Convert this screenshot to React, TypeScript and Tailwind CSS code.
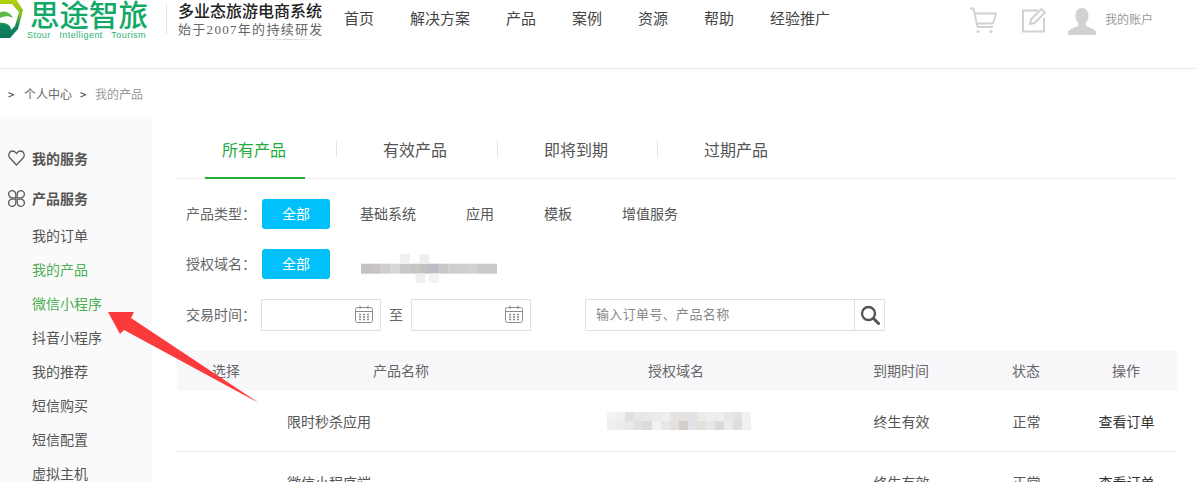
import React from "react";

function Mosaic({ w, h, cell, cells }: { w: number; h: number; cell: number; cells: [number, number, string][] }) {
  return (
    <svg width={w} height={h} viewBox={`0 0 ${w} ${h}`} className="shrink-0 blur-[0.5px]">
      {cells.map(([x, y, c], i) => (
        <rect key={i} x={x * cell} y={y * cell} width={cell + 0.3} height={cell + 0.3} fill={c} />
      ))}
    </svg>
  );
}

const domainCells: [number, number, string][] = [
  ...["#c4c2c1", "#c6c4c3", "#cfcdcd", "#d8d8d8", "#c9c8c8", "#c8c6c5", "#c2c0bf", "#bdbcc4", "#c9c8ca", "#cfcdcc", "#cfcecd", "#d3d1d1", "#cac9c9", "#cac9cb"].map(
    (c, i) => [i, 1, c] as [number, number, string],
  ),
  [4, 0, "#f1f1f1"],
  [6, 0, "#efefef"],
  [5.6, 2, "#f0f0f0"],
  [7, 2, "#f3f3f3"],
];

const rowCells: [number, number, string][] = [
  ...["#f3f3f3", "#f0f0f0", "#dfe0e2", "#e8e7e5", "#e9e8e6", "#ecebe9", "#eeeeee", "#e6e4e2", "#e4e1de", "#e0e3e6", "#ebebe9", "#eeeeec", "#eeeeee", "#e8e6e5", "#e4e2e1", "#f1f2f4"].map(
    (c, i) => [i, 0, c] as [number, number, string],
  ),
  ...["#eeeeee", "#ecebeb", "#e8e8e8", "#dde1e4", "#dbdad9", "#f2f2f2", "#e6e7e8", "#e6e0dc", "#d2d0ce", "#e1e3e6", "#e3dfdd", "#e7e7e9", "#dcd9d8", "#e9ebed", "#e0dedd", "#f1f1f3"].map(
    (c, i) => [i, 1, c] as [number, number, string],
  ),
];

function Logo() {
  return (
    <svg width="27" height="42" viewBox="0 0 27 42" className="shrink-0">
      <defs>
        <linearGradient id="hex" x1="0" y1="0" x2="0" y2="1">
          <stop offset="0" stopColor="#c8d600" />
          <stop offset="0.45" stopColor="#7fbf2a" />
          <stop offset="0.7" stopColor="#0f8a5f" />
          <stop offset="1" stopColor="#0c7258" />
        </linearGradient>
      </defs>
      <path d="M-2 -4H14L23 10L18 29L10 38H-2Z" fill="url(#hex)" />
      <path d="M-2 4H12L19 12L15 26L11 30C11 25 6 22 -2 23Z" fill="#fff" />
      <path d="M-2 13C4 10 10 12 13 18C8 15 3 16 -2 19Z" fill="#5ab947" />
    </svg>
  );
}

const nav = ["首页", "解决方案", "产品", "案例", "资源", "帮助", "经验推广"];
const side = ["我的订单", "我的产品", "微信小程序", "抖音小程序", "我的推荐", "短信购买", "短信配置", "虚拟主机"];
const types = ["基础系统", "应用", "模板", "增值服务"];

function Calendar() {
  return (
    <svg width="18" height="18" viewBox="0 0 18 18" fill="none" stroke="#8d8d8d" strokeWidth="1">
      <rect x="0.5" y="2.5" width="17" height="15" rx="2" />
      <path d="M0.5 6.500H17.500M5 0.500V4M13 0.500V4" />
      <path d="M4 9.500h2M8 9.500h2M12 9.500h2M4 12h2M8 12h2M12 12h2M4 14.500h2M8 14.500h2M12 14.500h2" strokeWidth="1.400" />
    </svg>
  );
}

function Pill() {
  return <span className="flex h-[30px] w-[68px] shrink-0 items-center justify-center rounded-[3px] bg-[#00c1f9] pb-[2px] text-[14px] text-white">全部</span>;
}

function DateBox() {
  return (
    <div className="flex h-8 w-[120px] items-center justify-end border border-[#e0e0e0] pr-[7px] pb-[2px]">
      <Calendar />
    </div>
  );
}

function Row({ name, domain, last }: { name: string; domain?: boolean; last?: boolean }) {
  return (
    <div className={`flex h-[61px] items-center text-[14px] text-[#555] ${last ? "" : "border-b border-[#ebebeb]"}`}>
      <span className="w-[98px]" />
      <span className="w-[252px] pl-[12px]">{name}</span>
      <span className="flex w-[298px] justify-center pl-[6px]">
        {domain && <Mosaic w={144} h={18} cell={9} cells={rowCells} />}
      </span>
      <span className="w-[152px] pl-px text-center">终生有效</span>
      <span className="w-[98px] pl-px text-center">正常</span>
      <span className="w-[102px] pl-px text-center text-[#333]">查看订单</span>
    </div>
  );
}

export default function App() {
  return (
    <div className="relative h-[482px] w-[1195px] overflow-hidden bg-white font-['Noto_Sans_CJK_SC','Noto_Sans',sans-serif] text-[#555]">
      <header className="flex h-[69px] items-start border-b border-[#e5e5e5]">
        <Logo />
        <div className="flex w-[139px] shrink-0 flex-col items-start">
          <span className="-mt-[2px] ml-[3px] text-[29.5px] leading-[30px] font-medium whitespace-nowrap text-[#12a866]">思途智旅</span>
          <span className="mt-px flex w-[119px] justify-between font-['Liberation_Sans',sans-serif] text-[9px] leading-[12px] tracking-[0.45px] text-[#2bb371]">
            <span>Stour</span>
            <span>Intelligent</span>
            <span>Tourism</span>
          </span>
        </div>
        <div className="mt-[4px] h-[30px] w-px bg-[#e3e3e3]" />
        <div className="ml-[11px] w-[166px] shrink-0">
          <div className="text-[16px] leading-[20px] font-medium whitespace-nowrap text-[#222]">多业态旅游电商系统</div>
          <div className="mt-px font-['Liberation_Serif','Noto_Sans_CJK_SC',serif] text-[13px] leading-[18px] tracking-[1.3px] whitespace-nowrap text-[#666]">始于2007年的持续研发</div>
          <div className="ml-[78px] h-px w-[68px] bg-gradient-to-r from-white via-[#d5d5d5] to-white" />
        </div>
        <nav className="flex gap-[36px] pt-[7px] text-[15px] leading-[22px] text-[#444]">
          {nav.map((n) => (
            <span key={n} className="whitespace-nowrap">{n}</span>
          ))}
        </nav>
        <div className="ml-auto flex items-start pt-[7px] pr-[42px]">
          <svg width="28" height="27" viewBox="0 0 28 27" fill="none" stroke="#d0d1d3" strokeWidth="1.800">
            <path d="M1 1.500h3.500L8.500 20H24" />
            <path d="M5.500 6.500H27L24 16.500H7.500" />
            <circle cx="9" cy="24.500" r="1.600" fill="#d0d1d3" stroke="none" />
            <circle cx="22" cy="24.500" r="1.600" fill="#d0d1d3" stroke="none" />
          </svg>
          <svg className="ml-[24px]" width="26" height="26" viewBox="0 0 26 26" fill="none" stroke="#d0d1d3" strokeWidth="2">
            <path d="M17 3.500H2v21h21V11" />
            <path d="M9 17l1-4.500L20.500 2l3.500 3.500L13.500 16Z" />
          </svg>
          <svg className="ml-[20px]" width="30" height="28" viewBox="0 0 30 28" fill="#d0d1d3">
            <path d="M15 1c4 0 6.500 3 6.500 7.500 0 3-1 5.500-2.800 7.500v2.500c2 1.500 8 3 10.300 6V28H1v-3.500c2.300-3 8.300-4.500 10.300-6V16C9.500 14 8.500 11.500 8.500 8.500 8.500 4 11 1 15 1Z" />
          </svg>
          <span className="ml-[8px] pt-[3px] text-[12px] leading-[18px] whitespace-nowrap text-[#999]">我的账户</span>
        </div>
      </header>

      <div className="flex h-[50px] items-center pl-[8px] text-[12px] text-[#666]">
        <span className="w-[16px] text-[11px] font-bold">&gt;</span>
        <span>个人中心</span>
        <span className="ml-[8px] w-[15px] text-[11px] font-bold">&gt;</span>
        <span className="text-[#999]">我的产品</span>
      </div>

      <div className="flex items-start">
        <aside className="h-[400px] w-[152px] shrink-0 bg-[#fafafa] pt-[28px] text-[14px]">
          <div className="flex h-[22px] items-center pl-[8px] font-bold text-[#555]">
            <svg width="17" height="16" viewBox="0 0 17 16" fill="none" stroke="#5a5a62" strokeWidth="1.300" className="mr-[7px]">
              <path d="M8.500 15L1.500 7.500C0 5.500 1 1 4.500 1c2 0 3 1 4 2.500 1-1.500 2-2.500 4-2.500 3.500 0 4.500 4.500 3 6.500Z" />
            </svg>
            我的服务
          </div>
          <div className="mt-[18px] flex h-[22px] items-center pl-[8px] font-bold text-[#555]">
            <svg width="17" height="17" viewBox="0 0 17 17" fill="none" stroke="#5a5a62" strokeWidth="1.300" className="mr-[7px]">
              <path d="M7.800 7.800H4.300A3.600 3.600 0 1 1 7.800 4.300Z" />
              <path d="M9.200 7.800V4.300A3.600 3.600 0 1 1 12.700 7.800Z" />
              <path d="M7.800 9.200V12.700A3.600 3.600 0 1 1 4.300 9.200Z" />
              <path d="M9.200 9.200H12.700A3.600 3.600 0 1 1 9.200 12.700Z" />
            </svg>
            产品服务
          </div>
          <ul className="mt-[9px] pl-[32px]">
            {side.map((s, i) => (
              <li key={s} className={`h-[34px] leading-[34px] ${i === 1 || i === 2 ? "text-[#4cae55]" : "text-[#555]"}`}>{s}</li>
            ))}
          </ul>
        </aside>

        <main className="ml-[25px] w-[1000px] shrink-0">
          <div className="flex h-[60px] items-center border-b border-[#ebebeb] text-[16px] text-[#555]">
            <div className="relative flex h-full w-[159px] items-center pl-[45px] text-[#21ad3a]">
              所有产品
              <span className="absolute -bottom-px left-[28px] h-[2px] w-[100px] bg-[#21ad3a]" />
            </div>
            <span className="h-4 w-px bg-[#e3e3e3]" />
            <div className="w-[160px] pl-[46px]">有效产品</div>
            <span className="h-4 w-px bg-[#e3e3e3]" />
            <div className="w-[159px] pl-[46px]">即将到期</div>
            <span className="h-4 w-px bg-[#e3e3e3]" />
            <div className="pl-[46px]">过期产品</div>
          </div>

          <div className="mt-[20px] flex h-[30px] items-center">
            <span className="w-[85px] shrink-0 pb-[2px] pl-[9px] text-[14px] text-[#666]">产品类型：</span>
            <Pill />
            <div className="ml-[30px] flex gap-[50px] pb-[2px] text-[14px] text-[#555]">
              {types.map((t) => (
                <span key={t}>{t}</span>
              ))}
            </div>
          </div>

          <div className="mt-[20px] flex h-[30px] items-center">
            <span className="w-[85px] shrink-0 pb-[2px] pl-[9px] text-[14px] text-[#666]">授权域名：</span>
            <Pill />
            <div className="mt-[8px] ml-[31px]">
              <Mosaic w={136} h={29} cell={9.7} cells={domainCells} />
            </div>
          </div>

          <div className="mt-[20px] flex h-8 items-center">
            <span className="w-[84px] shrink-0 pb-[2px] pl-[9px] text-[14px] text-[#666]">交易时间：</span>
            <DateBox />
            <span className="w-[30px] pb-[2px] text-center text-[14px] text-[#666]">至</span>
            <DateBox />
            <div className="ml-[54px] flex h-8 w-[300px] items-center border border-[#e0e0e0]">
              <span className="flex-1 pb-[2px] pl-[10px] text-[13px] tracking-[0.35px] text-[#888]">输入订单号、产品名称</span>
              <span className="flex h-full w-[30px] items-center justify-center border-l border-[#e0e0e0]">
                <svg width="20" height="20" viewBox="0 0 20 20" fill="none" stroke="#555" strokeWidth="2.400">
                  <circle cx="8.500" cy="8.500" r="6.500" />
                  <path d="M13.500 13.500L18.500 18.500" strokeLinecap="round" strokeWidth="3" />
                </svg>
              </span>
            </div>
          </div>

          <div className="mt-[20px] flex h-10 items-center bg-[#f8f8fb] pb-[2px] text-center text-[14px] text-[#666]">
            <span className="w-[98px]">选择</span>
            <span className="w-[252px]">产品名称</span>
            <span className="w-[298px]">授权域名</span>
            <span className="w-[152px]">到期时间</span>
            <span className="w-[98px]">状态</span>
            <span className="w-[102px]">操作</span>
          </div>
          <Row name="限时秒杀应用" domain />
          <Row name="微信小程序端" last />
        </main>
      </div>

      <svg className="pointer-events-none absolute top-0 left-0" width="1195" height="482">
        <polygon points="108,312 134,312 131,318 259,403 124,330 120,334" fill="#fb3b3b" />
      </svg>
    </div>
  );
}
